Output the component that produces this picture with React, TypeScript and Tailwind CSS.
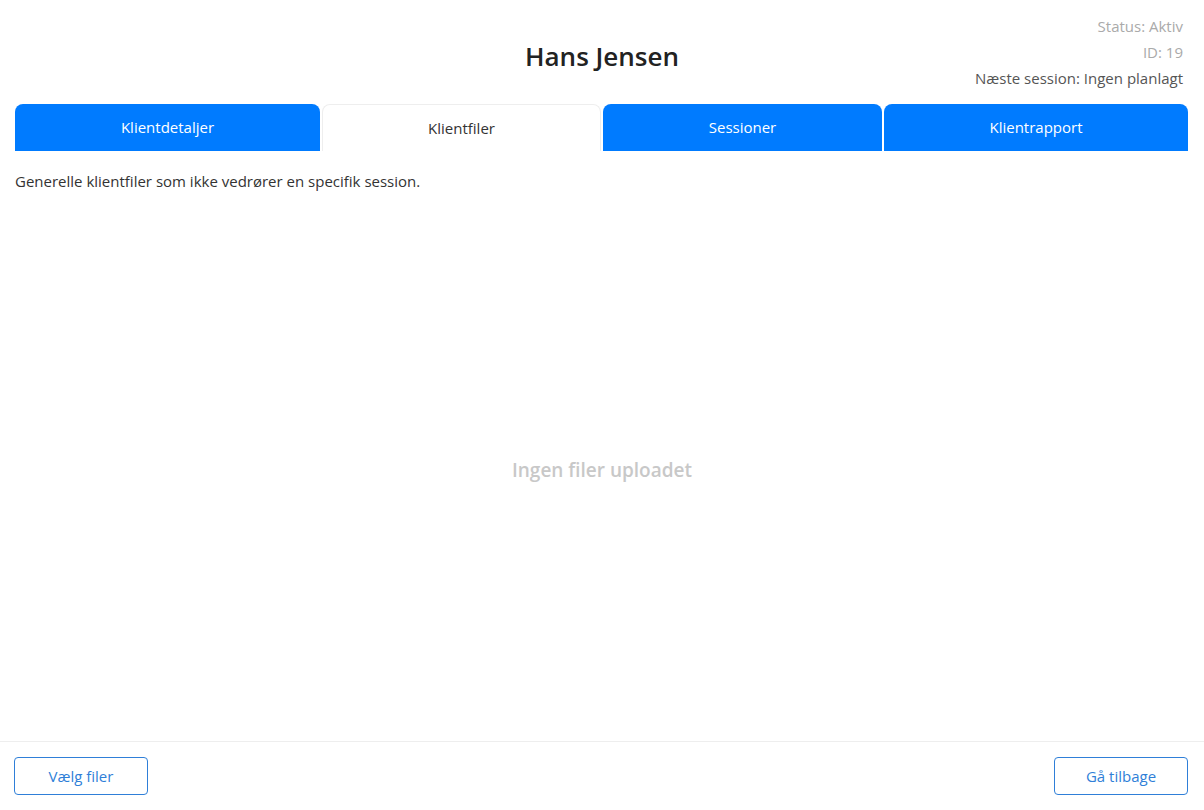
import React, { useState } from 'react';

type TabId = 'details' | 'files' | 'sessions' | 'report';

const TABS: { id: TabId; label: string }[] = [
  { id: 'details', label: 'Klientdetaljer' },
  { id: 'files', label: 'Klientfiler' },
  { id: 'sessions', label: 'Sessioner' },
  { id: 'report', label: 'Klientrapport' },
];

const App: React.FC = () => {
  const [activeTab, setActiveTab] = useState<TabId>('files');

  return (
    <div
      className="h-[810px] flex flex-col bg-white text-[#222]"
      style={{ fontFamily: '"Open Sans", "Noto Sans", sans-serif' }}
    >
      <header className="relative h-[104px] px-[15px]">
        <h1 className="pt-[37px] text-center text-[26px] leading-[38px] font-semibold text-[#222]">
          Hans Jensen
        </h1>
        <div className="absolute right-[21px] top-[13px] text-right text-[15px] leading-[26px]">
          <p className="text-[#aaa]">Status: Aktiv</p>
          <p className="text-[#aaa]">ID: 19</p>
          <p className="text-[#555]">Næste session: Ingen planlagt</p>
        </div>
      </header>

      <div className="mx-[15px] grid grid-cols-[305px_279px_279px_1fr] gap-[2px] mr-[16px]">
        {TABS.map(tab => (
          <button
            key={tab.id}
            onClick={() => setActiveTab(tab.id)}
            className={`h-[47px] rounded-t-[8px] text-[15px] ${
              activeTab === tab.id
                ? 'bg-white text-[#333] border border-b-0 border-[#eee]'
                : 'bg-[#007bff] text-white'
            }`}
          >
            {tab.label}
          </button>
        ))}
      </div>

      <main className="flex-1 flex flex-col px-[15px]">
        <p className="mt-[19px] text-[15px] leading-[22px] text-[#333]">
          Generelle klientfiler som ikke vedrører en specifik session.
        </p>
        <div className="flex-1 flex items-center justify-center pt-[8px]">
          <p className="text-[19px] font-semibold text-[#c8c8c8]">Ingen filer uploadet</p>
        </div>
      </main>

      <footer className="h-[69px] border-t border-[#eee] px-[14px] flex items-center justify-between pr-[16px]">
        <button className="w-[134px] h-[38px] rounded-[4px] border border-[#2f7fd8] text-[#2f7fd8] text-[15px]">
          Vælg filer
        </button>
        <button className="w-[134px] h-[38px] rounded-[4px] border border-[#2f7fd8] text-[#2f7fd8] text-[15px]">
          Gå tilbage
        </button>
      </footer>
    </div>
  );
};

export default App;
